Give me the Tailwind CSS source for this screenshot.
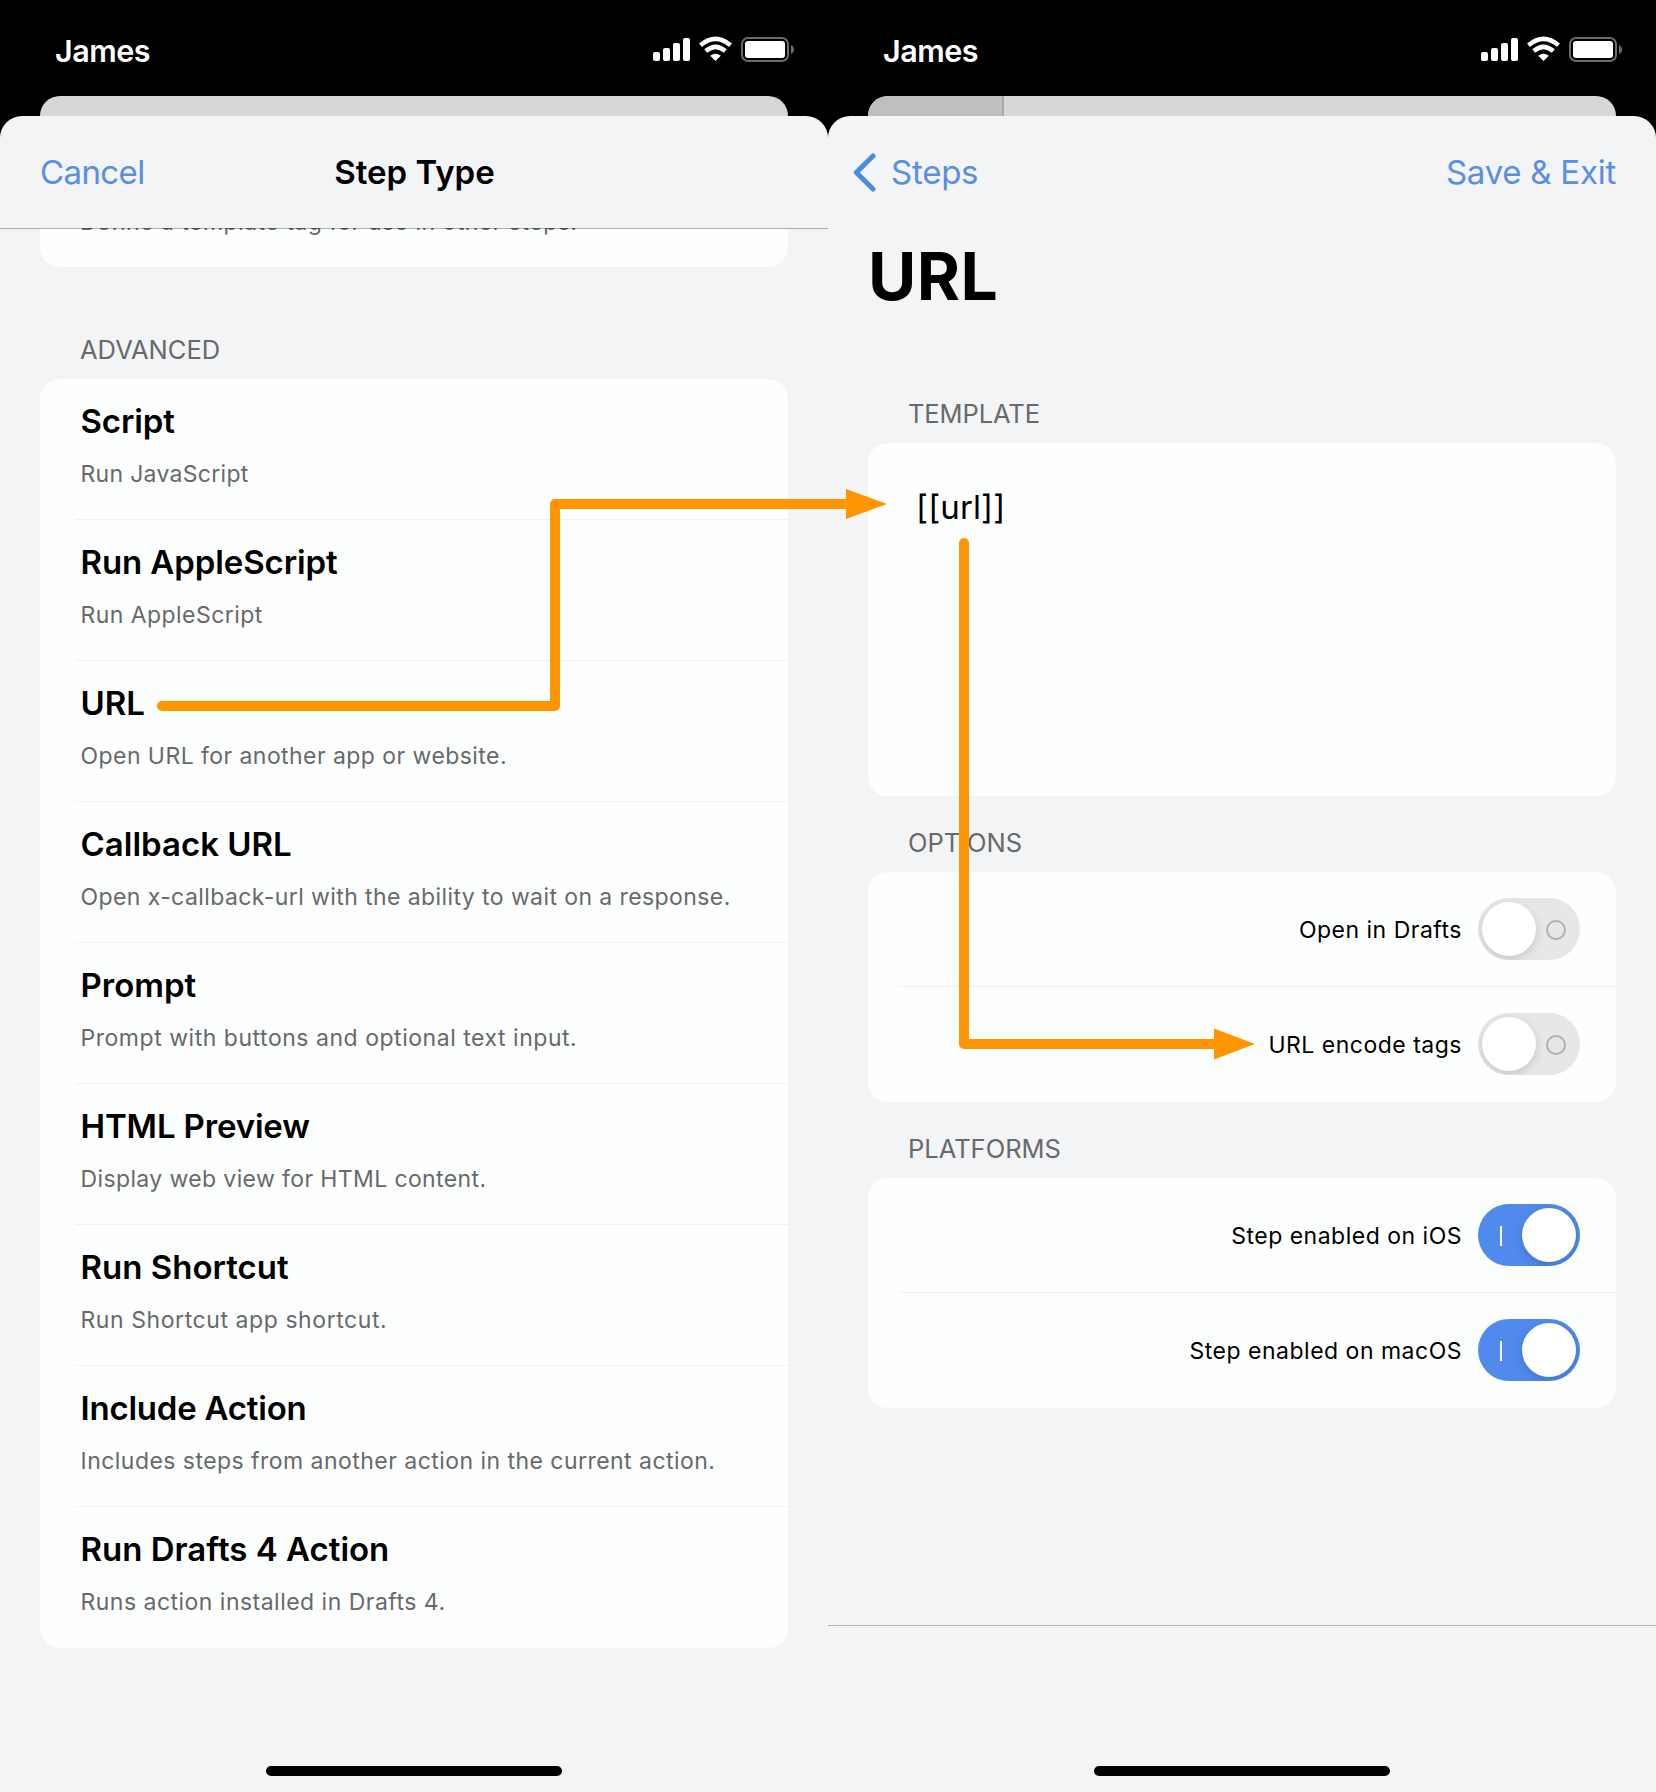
<!DOCTYPE html>
<html lang="en">
<head>
<meta charset="utf-8">
<title>Step editor</title>
<script src="https://cdn.jsdelivr.net/npm/@tailwindcss/browser@4"></script>
</head>
<body class="bg-black">
<svg class="hidden">
  <symbol id="status" viewBox="0 0 144 28">
    <g fill="#fff">
      <rect x="1" y="16" width="7" height="9" rx="2"/><rect x="11" y="12" width="7" height="13" rx="2"/><rect x="21" y="7" width="7" height="18" rx="2"/><rect x="31" y="2" width="7" height="23" rx="2"/>
      <path d="M63.5 25 L58.2 19.8 Q63.5 15.6 68.8 19.8 Z"/>
    </g>
    <g fill="none" stroke="#fff" stroke-width="4.4">
      <path d="M48.5 9.2 Q63.5 -3.4 78.5 9.2"/><path d="M53.7 15 Q63.5 6.8 73.3 15"/>
    </g>
    <rect x="90" y="2" width="46" height="23" rx="6" fill="none" stroke="#6b6b6b" stroke-width="2"/>
    <rect x="93" y="5" width="40" height="17" rx="3" fill="#fff"/>
    <path d="M139 9 Q142 10.5 142 13.5 Q142 16.5 139 18 Z" fill="#6b6b6b"/>
  </symbol>
</svg>
<div class="relative flex h-[1792px] w-[1656px] overflow-hidden bg-black font-['Inter',sans-serif] text-black">

  <!-- Step type picker -->
  <section class="flex w-[828px] flex-col">
    <header class="flex h-24 shrink-0 items-start justify-between pl-[55px] pr-[32px]">
      <span class="mt-[31px] text-[30.5px] leading-[40px] font-semibold tracking-[-0.5px] text-white">James</span>
      <svg class="mt-9 h-7 w-36"><use href="#status"/></svg>
    </header>
    <div class="mx-10 h-5 shrink-0 rounded-t-[20px] bg-[#d6d8d8]"></div>
    <main class="flex grow flex-col rounded-t-[22px] bg-[#f3f4f6]">
      <nav class="relative z-10 grid h-[113px] shrink-0 grid-cols-3 items-start border-b border-black/30 px-10 pt-9 text-[33px] leading-[40px]">
        <span class="tracking-[-0.6px] text-[#5a8de4]">Cancel</span>
        <span class="pl-px text-center font-semibold">Step Type</span>
      </nav>
      <div class="mx-10 -mt-px flex h-[39px] shrink-0 flex-col justify-end overflow-hidden rounded-b-[20px] bg-[#fdfefe] px-10 pb-[29px] text-[23px] leading-[32px] tracking-[0.48px] text-[#68696b]">Define a template tag for use in other steps.</div>
      <h2 class="mt-[67px] h-[45px] shrink-0 px-20 text-[25.5px] leading-[32px] text-[#68696b]">ADVANCED</h2>
      <ul class="mx-10 flex h-[1269px] shrink-0 flex-col rounded-[20px] bg-[#fdfefe] pl-[35px] [&_h3]:pt-[22px] [&_h3]:text-[33px] [&_h3]:leading-[40px] [&_h3]:font-semibold [&_li]:h-[141px] [&_li]:border-b [&_li]:border-[#f0f1f3] [&_li]:pl-[5.5px] [&_li:last-child]:border-b-0 [&_p]:mt-[17px] [&_p]:text-[23px] [&_p]:leading-[32px] [&_p]:text-[#68696b]">
        <li><h3 class="tracking-[-0.1px]">Script</h3><p class="tracking-[0.3px]">Run JavaScript</p></li>
        <li><h3 class="tracking-[-0.1px]">Run AppleScript</h3><p class="tracking-[0.44px]">Run AppleScript</p></li>
        <li><h3>URL</h3><p class="tracking-[0.44px]">Open URL for another app or website.</p></li>
        <li><h3>Callback URL</h3><p class="tracking-[0.41px]">Open x-callback-url with the ability to wait on a response.</p></li>
        <li><h3>Prompt</h3><p class="tracking-[0.53px]">Prompt with buttons and optional text input.</p></li>
        <li><h3 class="tracking-[-0.15px]">HTML Preview</h3><p class="tracking-[0.38px]">Display web view for HTML content.</p></li>
        <li><h3>Run Shortcut</h3><p class="tracking-[0.57px]">Run Shortcut app shortcut.</p></li>
        <li><h3 class="tracking-[-0.22px]">Include Action</h3><p class="tracking-[0.46px]">Includes steps from another action in the current action.</p></li>
        <li><h3>Run Drafts 4 Action</h3><p class="tracking-[0.48px]">Runs action installed in Drafts 4.</p></li>
      </ul>
      <div class="mx-auto mt-auto mb-4 h-2.5 w-[296px] rounded-full bg-black"></div>
    </main>
  </section>

  <!-- URL step editor -->
  <section class="flex w-[828px] flex-col">
    <header class="flex h-24 shrink-0 items-start justify-between pl-[55px] pr-[32px]">
      <span class="mt-[31px] text-[30.5px] leading-[40px] font-semibold tracking-[-0.5px] text-white">James</span>
      <svg class="mt-9 h-7 w-36"><use href="#status"/></svg>
    </header>
    <div class="mx-10 flex h-5 shrink-0 overflow-hidden rounded-t-[20px] bg-[#d6d8d8]">
      <div class="w-[136px] border-r-2 border-[#a8a9aa] bg-[#bebfbf]"></div>
    </div>
    <main class="flex grow flex-col rounded-t-[22px] bg-[#f3f4f6]">
      <nav class="flex h-[113px] shrink-0 items-start justify-between pt-9 pr-10 pl-[25px] text-[33px] leading-[40px] tracking-[-0.25px] text-[#5a8de4]">
        <span class="flex"><svg class="mt-px mr-[14px] h-10 w-6" fill="none" stroke="#4b8be6" stroke-width="5" stroke-linecap="round" stroke-linejoin="round"><path d="M20 3 L3.3 19.5 L20 36"/></svg>Steps</span>
        <span>Save &amp; Exit</span>
      </nav>
      <h1 class="mt-[7px] h-[80px] shrink-0 pl-10 text-[66px] leading-[80px] font-bold tracking-[0.4px]">URL</h1>
      <h2 class="mt-[82px] h-[45px] shrink-0 pl-20 text-[25.5px] leading-[32px] tracking-[-0.1px] text-[#68696b]">TEMPLATE</h2>
      <div class="mx-10 h-[353px] shrink-0 rounded-[20px] bg-[#fdfefe] pt-11 pl-12 text-[33px] leading-[40px] tracking-[0.1px]">[[url]]</div>
      <h2 class="mt-[31px] h-[45px] shrink-0 pl-20 text-[25.5px] leading-[32px] text-[#68696b]">OPTIONS</h2>
      <div class="mx-10 h-[230px] shrink-0 rounded-[20px] bg-[#fdfefe] pl-[31px] text-[23px] tracking-[0.5px]">
        <div class="flex h-[115px] items-center justify-end gap-4 border-b border-[#eff0f2] pr-9"><span class="pt-0.5">Open in Drafts</span>
          <div class="flex h-[62px] w-[102px] items-center overflow-hidden rounded-full bg-[#e6e7e8] pl-1"><div class="size-[54px] rounded-full bg-white shadow-[0_3px_10px_rgba(0,0,0,0.15)]"></div><div class="mt-[2px] ml-[10px] size-5 rounded-full border-2 border-[#b0b1b2]"></div></div></div>
        <div class="flex h-[114px] items-center justify-end gap-4 pr-9"><span class="pt-0.5">URL encode tags</span>
          <div class="flex h-[62px] w-[102px] items-center overflow-hidden rounded-full bg-[#e6e7e8] pl-1"><div class="size-[54px] rounded-full bg-white shadow-[0_3px_10px_rgba(0,0,0,0.15)]"></div><div class="mt-[2px] ml-[10px] size-5 rounded-full border-2 border-[#b0b1b2]"></div></div></div>
      </div>
      <h2 class="mt-[31px] h-[45px] shrink-0 pl-20 text-[25.5px] leading-[32px] text-[#68696b]">PLATFORMS</h2>
      <div class="mx-10 h-[230px] shrink-0 rounded-[20px] bg-[#fdfefe] pl-[31px] text-[23px] tracking-[0.5px]">
        <div class="flex h-[115px] items-center justify-end gap-4 border-b border-[#eff0f2] pr-9"><span class="pt-0.5">Step enabled on iOS</span>
          <div class="flex h-[62px] w-[102px] items-center justify-end overflow-hidden rounded-full bg-[#508aec] pr-1"><div class="mt-[2px] mr-5 h-5 w-0.5 bg-white"></div><div class="size-[54px] rounded-full bg-white shadow-[0_3px_10px_rgba(0,0,0,0.16)]"></div></div></div>
        <div class="flex h-[114px] items-center justify-end gap-4 pr-9"><span class="pt-0.5">Step enabled on macOS</span>
          <div class="flex h-[62px] w-[102px] items-center justify-end overflow-hidden rounded-full bg-[#508aec] pr-1"><div class="mt-[2px] mr-5 h-5 w-0.5 bg-white"></div><div class="size-[54px] rounded-full bg-white shadow-[0_3px_10px_rgba(0,0,0,0.16)]"></div></div></div>
      </div>
      <footer class="mt-auto flex h-[167px] flex-col justify-end border-t border-[#b4b5b8] pb-4">
        <div class="mx-auto h-2.5 w-[296px] rounded-full bg-black"></div>
      </footer>
    </main>
  </section>

  <!-- Annotation arrows laid over both screens -->
  <svg class="absolute inset-0 h-[1792px] w-[1656px]" fill="none" stroke="#ff9500" stroke-width="10" stroke-linecap="round" stroke-linejoin="round">
    <path d="M162 706 H555 V504 H850"/><path d="M846 489 L887 504 L846 519 Z" fill="#ff9500" stroke="none"/>
    <path d="M964 543 V1044 H1218"/><path d="M1214 1028.5 L1255 1044 L1214 1059.5 Z" fill="#ff9500" stroke="none"/>
  </svg>
</div>
</body>
</html>
